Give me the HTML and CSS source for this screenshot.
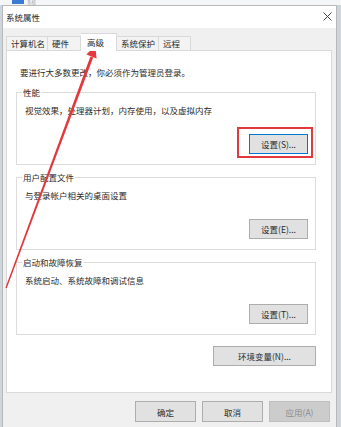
FILE: index.html
```html
<!DOCTYPE html>
<html lang="zh-CN">
<head>
  <meta charset="UTF-8" />
  <title>系统属性</title>
  <link rel="stylesheet" href="styles.css">
</head>
<body>
  <!-- window behind the dialog -->
  <div class="behind">
    <span class="behind-icon"></span>
    <span class="behind-title">系统</span>
  </div>

  <div class="dialog">
    <div class="titlebar">
      <span class="title">系统属性</span>
      <svg class="close" width="9" height="9" viewBox="0 0 9 9">
        <path d="M0.5 0.5 L8.5 8.5 M8.5 0.5 L0.5 8.5" stroke="#444" stroke-width="1" fill="none"/>
      </svg>
    </div>

    <div class="client">
      <div class="tabs">
        <div class="tab">计算机名</div>
        <div class="tab tab-hw">硬件</div>
        <div class="tab active">高级</div>
        <div class="tab">系统保护</div>
        <div class="tab tab-remote">远程</div>
      </div>

      <div class="panel">
        <p class="notice">要进行大多数更改，你必须作为管理员登录。</p>

        <fieldset class="group">
          <legend>性能</legend>
          <p class="desc">视觉效果，处理器计划，内存使用，以及虚拟内存</p>
          <div class="group-actions">
            <button class="btn focused">设置(S)...</button>
          </div>
        </fieldset>

        <fieldset class="group">
          <legend>用户配置文件</legend>
          <p class="desc">与登录帐户相关的桌面设置</p>
          <div class="group-actions">
            <button class="btn">设置(E)...</button>
          </div>
        </fieldset>

        <fieldset class="group">
          <legend>启动和故障恢复</legend>
          <p class="desc">系统启动、系统故障和调试信息</p>
          <div class="group-actions">
            <button class="btn">设置(T)...</button>
          </div>
        </fieldset>

        <div class="env-row">
          <button class="btn btn-env">环境变量(N)...</button>
        </div>
      </div>

      <div class="footer">
        <button class="btn btn-footer">确定</button>
        <button class="btn btn-footer">取消</button>
        <button class="btn btn-footer" disabled>应用(A)</button>
      </div>
    </div>
  </div>

  <!-- red annotation drawn over the screenshot -->
  <svg class="annotation" width="341" height="427" viewBox="0 0 341 427">
    <rect x="238" y="128" width="74" height="29" fill="none" stroke="#e2383e" stroke-width="2"/>
    <polygon points="93.2,57.6 90.4,56.6 5.4,287.8 6.7,288.2" fill="#e2383e"/>
    <polygon points="95.2,45.5 96.6,58.4 86.4,54.6" fill="#e2383e"/>
  </svg>
</body>
</html>
```

FILE: styles.css
```css
:root {
  --face: #f0f0f0;
  --line: #d9d9d9;
  --btn: #e1e1e1;
  --btn-border: #adadad;
  --focus: #0078d7;
  --text: #2b2b2b;
}

body {
  margin: 0;
  width: 341px;
  height: 427px;
  overflow: hidden;
  position: relative;
  background: #cdd5de;
  font-family: "Noto Sans CJK SC", "Noto Sans", sans-serif;
  font-size: 8.5px;
  line-height: 12px;
  color: var(--text);
}

p {
  margin: 0;
}

.behind {
  height: 5px;
  display: flex;
  align-items: flex-start;
  padding-left: 12px;
  background: #f5f6f8;
}

.behind-icon {
  width: 12px;
  height: 4px;
  background: #3a7bd5;
}

.behind-title {
  margin-left: 3px;
  color: #9a9a9a;
  font-size: 4.5px;
  line-height: 5px;
}

.dialog {
  margin-left: 2px;
  width: 333px;
  height: 421px;
  border: 1px solid #b8b8b8;
  border-bottom: none;
  background: var(--face);
}

.titlebar {
  height: 22px;
  display: flex;
  align-items: center;
  justify-content: space-between;
  padding: 0 4px 0 3px;
  background: #fff;
}

.title {
  color: #1f1f1f;
}

.close {
  margin-top: -2px;
}

.client {
  padding: 0 4px 0 3px;
}

.tabs {
  height: 23px;
  margin-bottom: -1px;
  display: flex;
  align-items: flex-end;
}

.tab {
  box-sizing: border-box;
  height: 14px;
  margin-bottom: 1px;
  padding-left: 4px;
  border: 1px solid var(--line);
  border-bottom: none;
  border-left: none;
  background: #f3f3f3;
  line-height: 13px;
}

.tab:first-child {
  width: 42px;
  border-left: 1px solid var(--line);
}

.tab-hw {
  width: 33px;
}

.tab:nth-child(4) {
  width: 42px;
}

.tab-remote {
  width: 32px;
}

.tab.active {
  position: relative;
  z-index: 1;
  width: 36px;
  height: 18px;
  margin-bottom: 0;
  padding-left: 6px;
  background: #fff;
  line-height: 17px;
}

.panel {
  box-sizing: border-box;
  width: 326px;
  height: 343px;
  border: 1px solid var(--line);
  background: #fff;
  padding-top: 15px;
}

.notice {
  padding-left: 13px;
}

.group {
  margin: 8px 15px 0 9px;
  padding: 6px 7px 10px 8px;
  border: 1px solid #dcdcdc;
  min-inline-size: 0;
}

.group + .group {
  margin-top: 6px;
}

.group legend {
  margin-left: -3px;
  padding: 0 1px;
  line-height: 12px;
}

.group-actions {
  display: flex;
  justify-content: flex-end;
  margin-top: 18px;
}

.btn {
  box-sizing: border-box;
  width: 59px;
  height: 20px;
  padding: 0;
  border: 1px solid var(--btn-border);
  background: var(--btn);
  font-family: inherit;
  font-size: 8.5px;
  line-height: 18px;
  color: var(--text);
}

.btn.focused {
  border-color: var(--focus);
}

.env-row {
  display: flex;
  justify-content: flex-end;
  margin: 11px 15px 0 0;
}

.btn-env {
  width: 103px;
}

.footer {
  display: flex;
  justify-content: flex-end;
  gap: 6px;
  padding: 8px 2px 0 0;
}

.btn-footer {
  width: 61px;
  height: 21px;
}

.btn-footer:disabled {
  background: #cccccc;
  border-color: #bfbfbf;
  color: #8c8c8c;
}

.annotation {
  position: absolute;
  left: 0;
  top: 0;
  pointer-events: none;
}
```
